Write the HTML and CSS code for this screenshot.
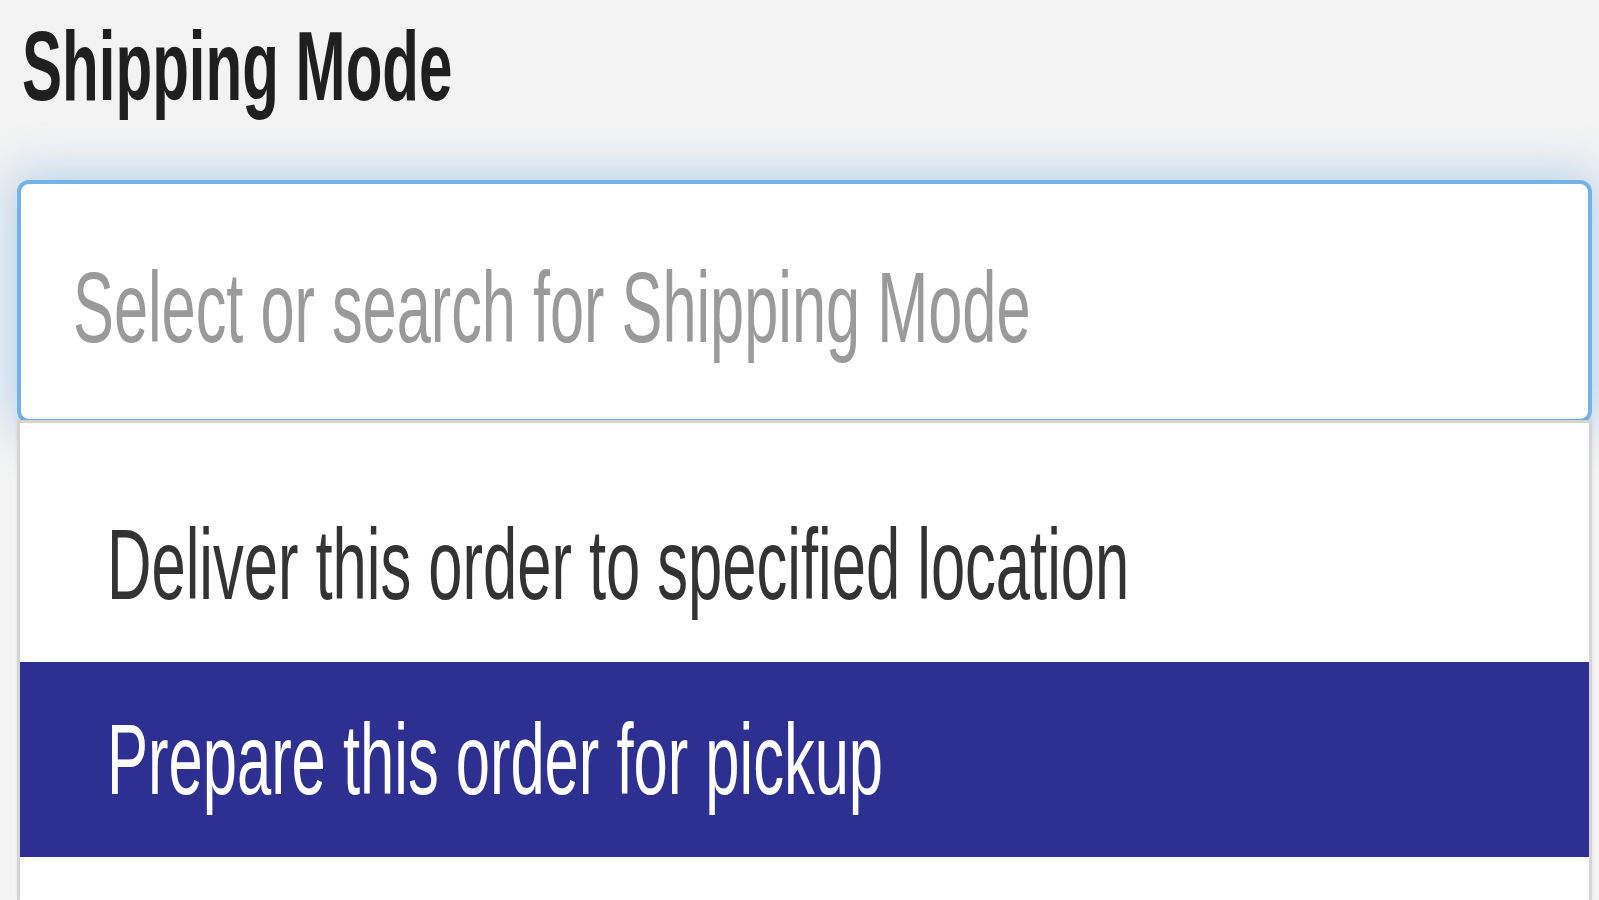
FILE: index.html
```html
<!DOCTYPE html>
<html lang="en">
<head>
<meta charset="utf-8">
<title>Shipping Mode</title>
<link rel="stylesheet" href="styles.css">
</head>
<body>
  <div class="field">
    <label class="label"><span class="squeeze">Shipping Mode</span></label>
    <div class="select">
      <div class="control">
        <span class="placeholder squeeze">Select or search for Shipping Mode</span>
      </div>
      <ul class="menu">
        <li class="option"><span class="squeeze">Deliver this order to specified location</span></li>
        <li class="option active"><span class="squeeze">Prepare this order for pickup</span></li>
      </ul>
    </div>
  </div>
</body>
</html>
```

FILE: styles.css
```css
html, body {
  margin: 0;
  padding: 0;
  height: 100%;
}
body {
  background: #f3f3f3;
  font-family: "Liberation Sans", Arial, sans-serif;
  overflow: hidden;
}
.squeeze {
  display: inline-block;
  white-space: nowrap;
  transform: scaleX(0.613);
  transform-origin: left center;
}
.field {
  padding: 17px 7px 0 17px;
}
.label {
  display: block;
  font-size: 98px;
  font-weight: bold;
  line-height: 1;
  color: #1f1f1f;
  padding-left: 5px;
  margin-bottom: 65px;
}
.select {
  position: relative;
}
.control {
  box-sizing: border-box;
  height: 243px;
  background: #fff;
  border: 4px solid #74b3e8;
  border-radius: 12px;
  box-shadow: 0 0 45px 8px rgba(120, 172, 225, 0.45);
  padding: 73px 0 0 52px;
}
.placeholder {
  font-size: 100px;
  line-height: 1;
  color: #9a9a9a;
}
.menu {
  position: absolute;
  left: 0;
  right: 0;
  top: 240px;
  box-sizing: border-box;
  height: 480px;
  margin: 0;
  padding: 44px 0 0;
  list-style: none;
  background: #fff;
  border: 3px solid #d4d4d4;
  border-bottom: none;
  box-shadow: 0 -2px 3px rgba(0, 0, 0, 0.08);
}
.option {
  height: 195px;
  display: flex;
  align-items: center;
  padding-left: 87px;
  font-size: 101px;
  line-height: 1;
  color: #333;
}
.option .squeeze {
  transform: scaleX(0.609);
}
.option.active {
  background: #2e3091;
  color: #fff;
}
```
